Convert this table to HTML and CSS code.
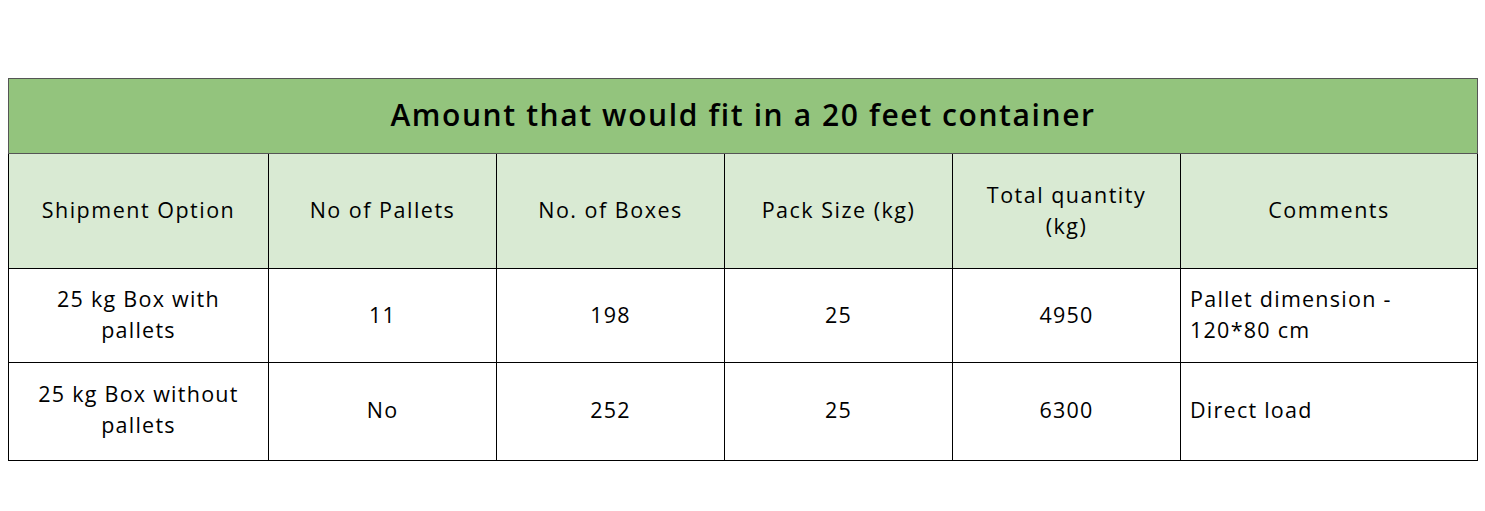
FILE: index.html
```html
<!DOCTYPE html>
<html>
<head>
<meta charset="utf-8">
<link rel="stylesheet" href="styles.css">
</head>
<body>
<div class="page">
<table class="grid">
  <colgroup>
    <col class="c1"><col class="c2"><col class="c2"><col class="c2"><col class="c2"><col class="c6">
  </colgroup>
  <tr class="title-row"><td colspan="6">Amount that would fit in a 20 feet container</td></tr>
  <tr class="head-row">
    <th>Shipment Option</th>
    <th>No of Pallets</th>
    <th>No. of Boxes</th>
    <th>Pack Size (kg)</th>
    <th>Total quantity<br>(kg)</th>
    <th>Comments</th>
  </tr>
  <tr class="row1">
    <td>25 kg Box with<br>pallets</td>
    <td>11</td>
    <td>198</td>
    <td>25</td>
    <td>4950</td>
    <td class="left">Pallet dimension -<br>120*80 cm</td>
  </tr>
  <tr class="row2">
    <td>25 kg Box without<br>pallets</td>
    <td>No</td>
    <td>252</td>
    <td>25</td>
    <td>6300</td>
    <td class="left">Direct load</td>
  </tr>
</table>
</div>
</body>
</html>
```
FILE: styles.css
```css
html, body { margin: 0; padding: 0; background: #fff; }
.page { padding: 78px 0 0 8px; }
.grid {
  border-collapse: collapse;
  width: 1469px;
  table-layout: fixed;
  font-family: "Open Sans", "Noto Sans", sans-serif;
  color: #000;
  border: 1px solid #555;
}
.c1 { width: 260px; }
.c2 { width: 228px; }
.c6 { width: 297px; }
.grid td, .grid th {
  border: 1px solid #000;
  text-align: center;
  vertical-align: middle;
  padding: 0 9px 3px;
  font-size: 21.5px;
  line-height: 31px;
  letter-spacing: 1.25px;
  font-weight: 400;
}
.grid th { font-weight: 500; letter-spacing: 1.5px; }
.title-row td {
  background: #93c47d;
  height: 70px;
  padding-bottom: 4px;
  font-size: 30px;
  font-weight: 600;
  letter-spacing: 1.6px;
  border-bottom: 1px solid #ccc;
  border-color: #555;
}
.head-row th { background: #d9ead3; height: 111px; }
.row1 td { height: 90px; }
.row2 td { height: 92px; padding-bottom: 5px; }
.grid td.left { text-align: left; }
```
